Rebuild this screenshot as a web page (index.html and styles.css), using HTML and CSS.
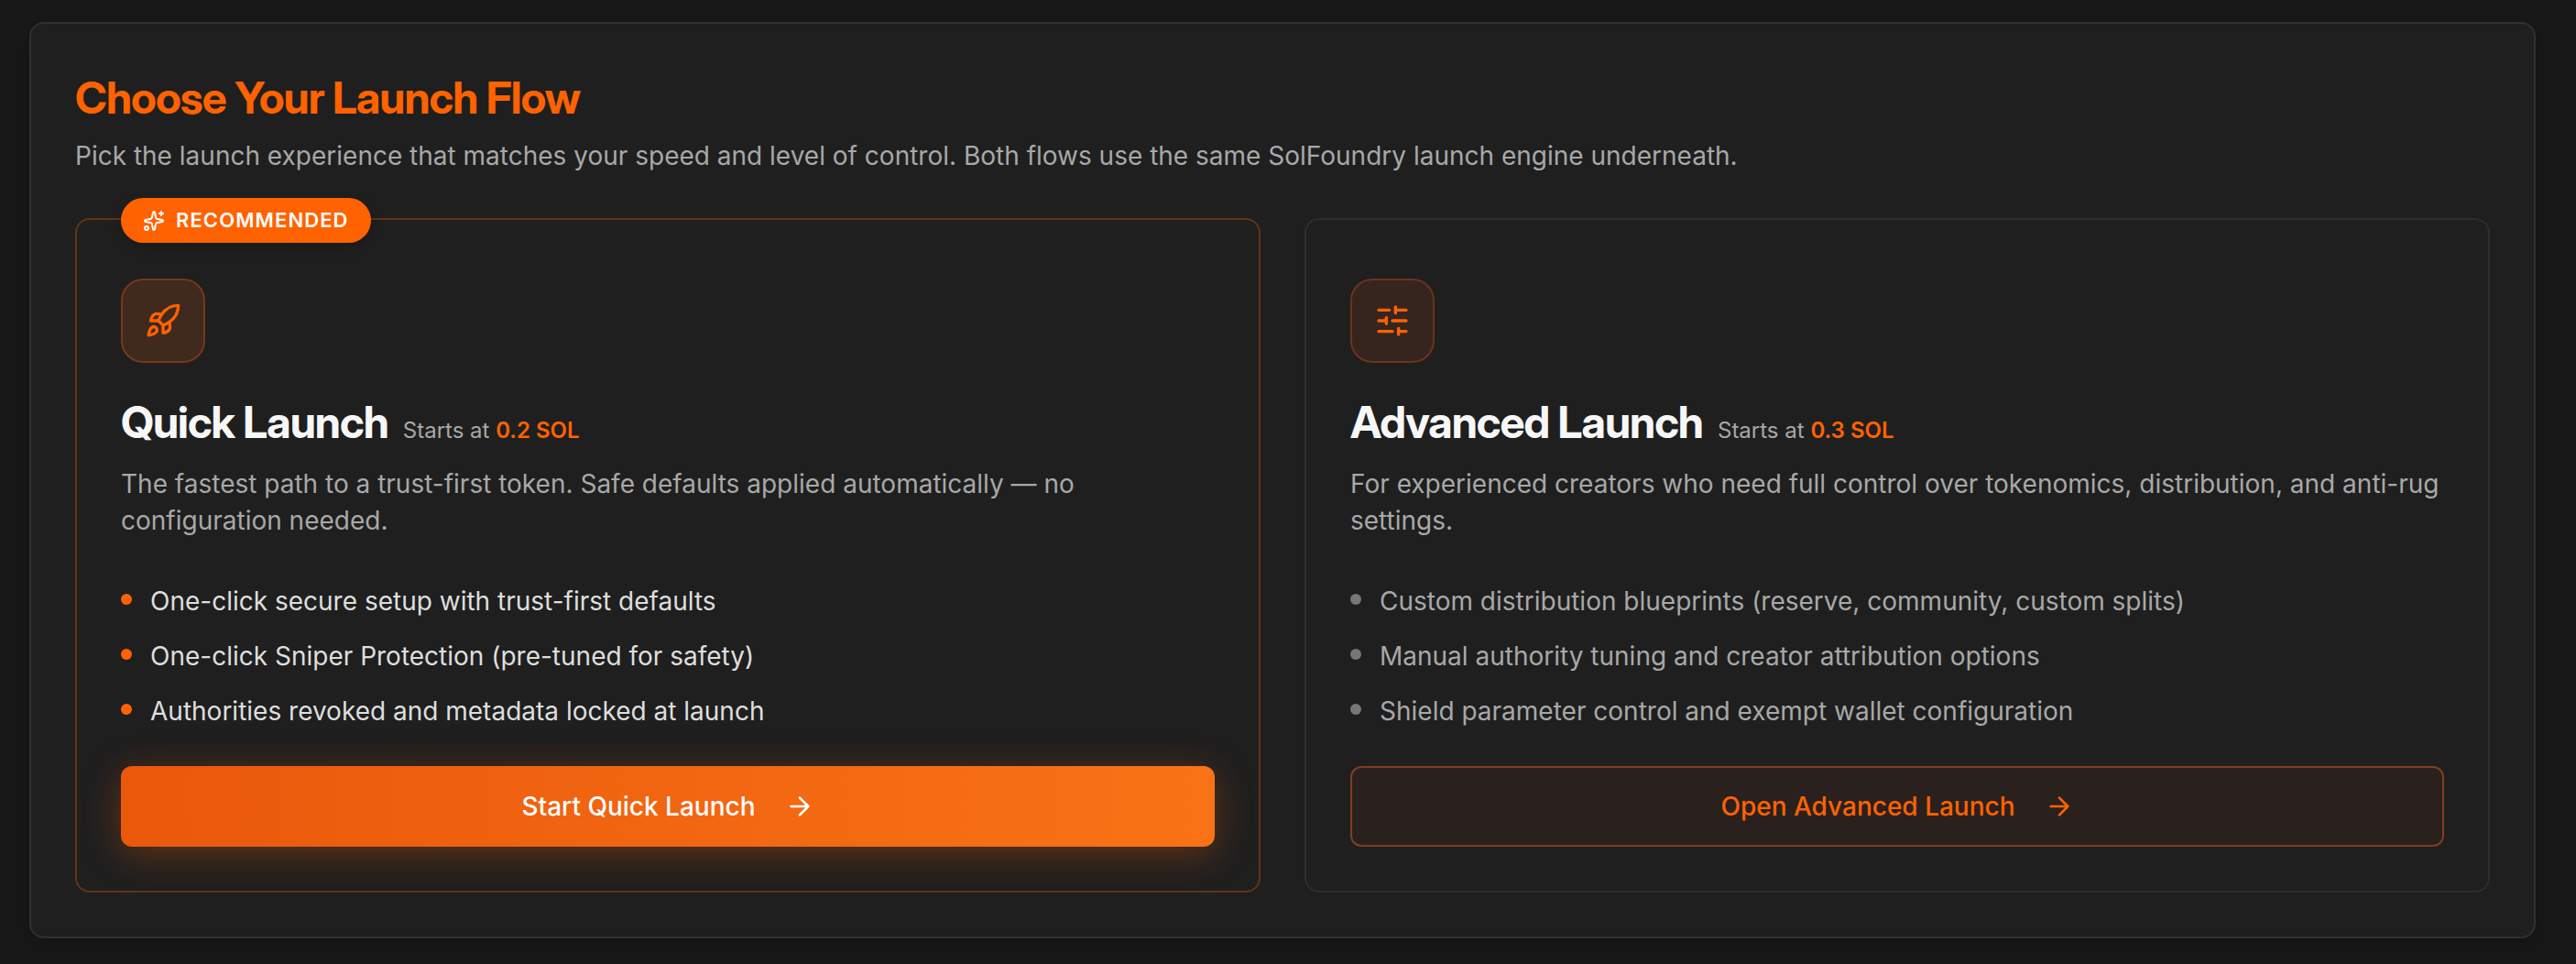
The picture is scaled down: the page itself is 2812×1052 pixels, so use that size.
FILE: index.html
```html
<!DOCTYPE html>
<html lang="en">
<head>
  <meta charset="UTF-8" />
  <meta name="viewport" content="width=device-width, initial-scale=1.0"/>
  <title>Choose Your Launch Flow</title>
  <link rel="stylesheet" href="styles.css">
</head>
<body>

  <section class="panel">
    <h1>Choose Your Launch Flow</h1>
    <p class="intro">Pick the launch experience that matches your speed and level of control. Both flows use the same SolFoundry launch engine underneath.</p>

    <div class="flows">
      <article class="flow recommended">
        <div class="badge">
          <svg class="icon-badge" viewBox="0 0 24 24">
            <path d="M11.017 2.814a1 1 0 0 1 1.966 0l1.051 5.558a2 2 0 0 0 1.594 1.594l5.558 1.051a1 1 0 0 1 0 1.966l-5.558 1.051a2 2 0 0 0-1.594 1.594l-1.051 5.558a1 1 0 0 1-1.966 0l-1.051-5.558a2 2 0 0 0-1.594-1.594l-5.558-1.051a1 1 0 0 1 0-1.966l5.558-1.051a2 2 0 0 0 1.594-1.594z"/>
            <path d="M20 2v4M22 4h-4"/>
            <circle cx="4" cy="20" r="2"/>
          </svg>
          <span>RECOMMENDED</span>
        </div>

        <div class="flow-icon">
          <svg class="icon-main" viewBox="0 0 24 24">
            <path d="M4.5 16.5c-1.5 1.26-2 5-2 5s3.74-.5 5-2c.71-.84.7-2.13-.09-2.91a2.18 2.18 0 0 0-2.91-.09z"/>
            <path d="m12 15-3-3a22 22 0 0 1 2-3.95A12.88 12.88 0 0 1 22 2c0 2.72-.78 7.5-6 11a22.35 22.35 0 0 1-4 2z"/>
            <path d="M9 12H4s.55-3.03 2-4c1.62-1.08 5 0 5 0"/>
            <path d="M12 15v5s3.03-.55 4-2c1.08-1.62 0-5 0-5"/>
          </svg>
        </div>

        <div class="flow-title">
          <h2>Quick Launch</h2>
          <span class="price">Starts at <strong>0.2 SOL</strong></span>
        </div>
        <p class="flow-text">The fastest path to a trust-first token. Safe defaults applied automatically — no configuration needed.</p>

        <ul class="features">
          <li>One-click secure setup with trust-first defaults</li>
          <li>One-click Sniper Protection (pre-tuned for safety)</li>
          <li>Authorities revoked and metadata locked at launch</li>
        </ul>

        <button class="btn btn-primary" type="button">
          Start Quick Launch
          <svg class="icon-arrow" viewBox="0 0 24 24"><path d="M5 12h14M12 5l7 7-7 7"/></svg>
        </button>
      </article>

      <article class="flow">
        <div class="flow-icon">
          <svg class="icon-main" viewBox="0 0 24 24">
            <path d="M21 5h-7M10 5H3M21 12h-9M8 12H3M21 19h-5M12 19H3M14 3v4M8 10v4M16 17v4"/>
          </svg>
        </div>

        <div class="flow-title">
          <h2>Advanced Launch</h2>
          <span class="price">Starts at <strong>0.3 SOL</strong></span>
        </div>
        <p class="flow-text">For experienced creators who need full control over tokenomics, distribution, and anti-rug settings.</p>

        <ul class="features">
          <li>Custom distribution blueprints (reserve, community, custom splits)</li>
          <li>Manual authority tuning and creator attribution options</li>
          <li>Shield parameter control and exempt wallet configuration</li>
        </ul>

        <button class="btn btn-outline" type="button">
          Open Advanced Launch
          <svg class="icon-arrow" viewBox="0 0 24 24"><path d="M5 12h14M12 5l7 7-7 7"/></svg>
        </button>
      </article>
    </div>
  </section>

</body>
</html>
```

FILE: styles.css
```css
* {
  box-sizing: border-box;
}

body {
  margin: 0;
  padding: 24px 44px 28px 32px;
  background: #181818;
  color: #a8a8a8;
  font-family: Inter, "Liberation Sans", sans-serif;
  font-size: 28px;
  line-height: 40px;
}

h1, h2, p, ul {
  margin: 0;
  padding: 0;
}

h1, h2 {
  font-family: "Inter Display", Inter, "Liberation Sans", sans-serif;
  font-variation-settings: "opsz" 32;
  font-size: 48px;
  line-height: 66px;
  font-weight: 700;
  letter-spacing: -0.02em;
}

h1 {
  color: #ff6200;
  margin-bottom: 10px;
}

h2 {
  color: #f7f7f7;
}

svg {
  fill: none;
  stroke: currentColor;
  stroke-width: 2;
  stroke-linecap: round;
  stroke-linejoin: round;
  flex-shrink: 0;
}

.panel {
  padding: 48px;
  background: #1f1f1f;
  border: 2px solid #303030;
  border-radius: 16px;
  box-shadow: 0 8px 24px rgba(0, 0, 0, 0.2);
}

.flows {
  display: grid;
  grid-template-columns: 1fr 1fr;
  gap: 48px;
  margin-top: 48px;
}

.flow {
  position: relative;
  display: flex;
  flex-direction: column;
  padding: 64px 48px 48px;
  border: 2px solid #2e2e2e;
  border-radius: 16px;
}

.recommended {
  border-color: #62331b;
}

/* sits on the top border of the card */
.badge {
  position: absolute;
  top: -24px;
  left: 48px;
  display: flex;
  align-items: center;
  gap: 12px;
  padding: 8px 24px;
  border-radius: 25px;
  background: #ff6200;
  color: #fff;
  font-size: 22px;
  line-height: 33px;
  font-weight: 600;
  letter-spacing: 0.05em;
  box-shadow: 0 4px 12px rgba(0, 0, 0, 0.2);
}

.icon-badge {
  width: 24px;
  height: 24px;
}

.flow-icon {
  display: flex;
  align-items: center;
  justify-content: center;
  width: 92px;
  height: 92px;
  margin-bottom: 32px;
  border: 2px solid #6a341a;
  border-radius: 24px;
  background: #35251e;
  color: #ff6200;
}

.recommended .flow-icon {
  border-color: #75391b;
  background: #40291d;
}

.icon-main {
  width: 40px;
  height: 40px;
}

.flow-title {
  display: flex;
  align-items: baseline;
  gap: 16px;
  margin-bottom: 14px;
}

.price {
  font-size: 24px;
}

.price strong {
  color: #ff6200;
  font-weight: 600;
}

.features {
  display: flex;
  flex-direction: column;
  gap: 20px;
  margin: 48px 0 40px;
  list-style: none;
}

.features li {
  display: flex;
  gap: 20px;
}

.features li::before {
  content: "";
  flex-shrink: 0;
  width: 12px;
  height: 12px;
  margin-top: 12px;
  border-radius: 50%;
  background: #777;
}

.recommended .features {
  color: #dedede;
}

.recommended .features li::before {
  background: #ff6200;
}

.btn {
  display: flex;
  align-items: center;
  justify-content: center;
  gap: 32px;
  height: 88px;
  margin-top: auto;
  border: none;
  border-radius: 12px;
  font-family: inherit;
  font-size: 28px;
  line-height: 40px;
  font-weight: 500;
  cursor: pointer;
}

.btn-primary {
  background: linear-gradient(to right, #ea580c, #f97316);
  color: #fff;
  box-shadow: 0 8px 40px rgba(255, 98, 0, 0.3);
}

.btn-outline {
  background: #2a211e;
  border: 2px solid #803e1e;
  color: #ff6200;
}

.icon-arrow {
  width: 32px;
  height: 32px;
}

@media (max-width: 1400px) {
  .flows {
    grid-template-columns: 1fr;
  }
}
```
